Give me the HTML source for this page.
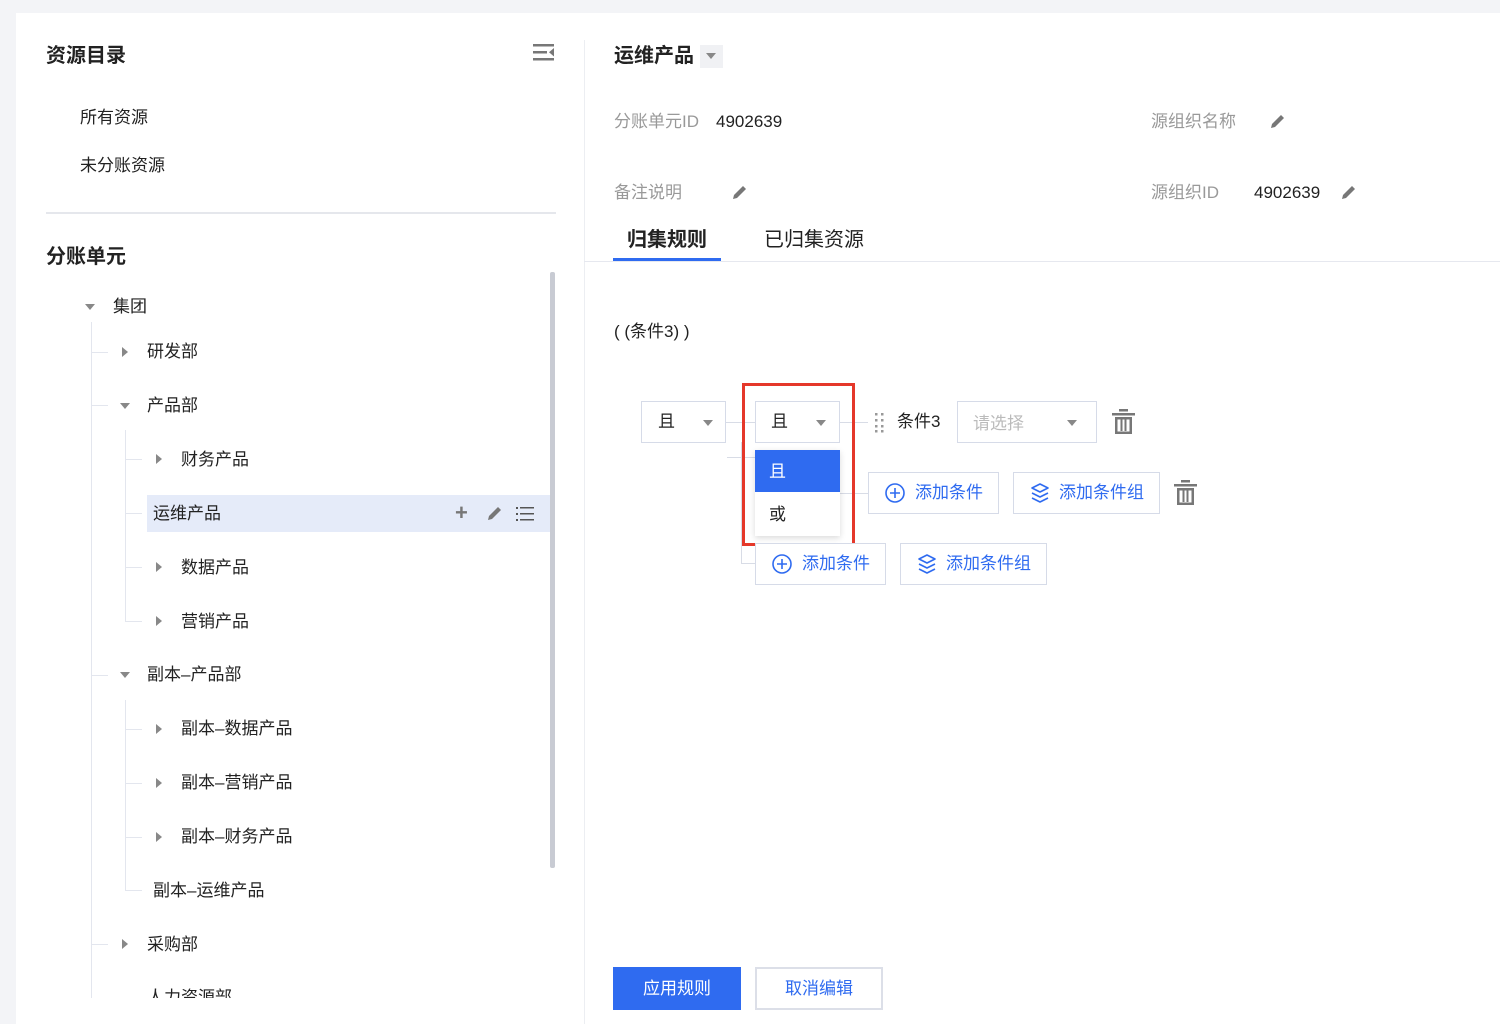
<!DOCTYPE html>
<html><head><meta charset="utf-8"><style>
*{margin:0;padding:0;box-sizing:border-box}
body{width:1500px;height:1024px;background:#f3f4f7;font-family:"Liberation Sans","Noto Sans CJK SC",sans-serif;color:#222;position:relative;overflow:hidden;font-size:17px}
.a{position:absolute;white-space:nowrap}
.panel{position:absolute;left:16px;top:13px;width:1484px;height:1011px;background:#fff}
.t{line-height:22px}
.hl{position:absolute;height:1px;background:#e3e6ee}
.vl{position:absolute;width:1px;background:#e3e6ee}
.tri-d{position:absolute;width:0;height:0;border-left:5px solid transparent;border-right:5px solid transparent;border-top:6px solid #888}
.tri-r{position:absolute;width:0;height:0;border-top:5px solid transparent;border-bottom:5px solid transparent;border-left:6px solid #888}
.box{position:absolute;border:1px solid #d6dbe8;background:#fff}
.blue{color:#2f6bf0}
.gray{color:#999}
</style></head><body>
<div class="panel"></div>
<!-- left -->
<div class="a t" style="left:46px;top:45px;font-size:20px;font-weight:bold">资源目录</div>
<svg class="a" style="left:533px;top:43px" width="22" height="18"><rect x="0" y="1" width="21" height="2.5" fill="#777"/><rect x="0" y="8" width="14" height="2.5" fill="#777"/><path d="M21 5 L16 9.3 L21 13.5Z" fill="#777"/><rect x="0" y="15" width="21" height="2.5" fill="#777"/></svg>
<div class="a t" style="left:80px;top:107px">所有资源</div>
<div class="a t" style="left:80px;top:155px">未分账资源</div>
<div class="hl" style="left:46px;top:212px;width:510px;background:#e5e7ec;height:2px"></div>
<div class="a t" style="left:46px;top:246px;font-size:20px;font-weight:bold">分账单元</div>
<div class="tri-d" style="left:85px;top:304px"></div>
<div class="a t" style="left:113px;top:296px">集团</div>
<div class="vl" style="left:91px;top:322px;height:676px"></div>
<div class="hl" style="left:91px;top:352px;width:17px"></div>
<div class="tri-r" style="left:122px;top:347px"></div><div class="a t" style="left:147px;top:341px">研发部</div>
<div class="hl" style="left:91px;top:405px;width:17px"></div>
<div class="tri-d" style="left:120px;top:403px"></div><div class="a t" style="left:147px;top:395px">产品部</div>
<div class="vl" style="left:125px;top:430px;height:192px"></div>
<div class="hl" style="left:125px;top:459px;width:17px"></div>
<div class="tri-r" style="left:156px;top:454px"></div><div class="a t" style="left:181px;top:449px">财务产品</div>
<div class="a" style="left:147px;top:495px;width:404px;height:37px;background:#e5ebf9"></div>
<div class="hl" style="left:125px;top:513px;width:17px"></div>
<div class="a t" style="left:153px;top:503px">运维产品</div>
<div class="a" style="left:455px;top:503px;font-size:22px;color:#777;line-height:20px;font-weight:bold">+</div>
<svg class="a" style="left:486px;top:505px" width="17" height="17"><path d="M2 15 L3 11 L12 2 L15 5 L6 14Z" fill="#777"/></svg>
<svg class="a" style="left:516px;top:506px" width="19" height="16"><g fill="#555"><rect x="0" y="1" width="2" height="2"/><rect x="4" y="1" width="14" height="1.5"/><rect x="0" y="7" width="2" height="2"/><rect x="4" y="7" width="14" height="1.5"/><rect x="0" y="13" width="2" height="2"/><rect x="4" y="13" width="14" height="1.5"/></g></svg>
<div class="hl" style="left:125px;top:567px;width:17px"></div>
<div class="tri-r" style="left:156px;top:562px"></div><div class="a t" style="left:181px;top:557px">数据产品</div>
<div class="hl" style="left:125px;top:621px;width:17px"></div>
<div class="tri-r" style="left:156px;top:616px"></div><div class="a t" style="left:181px;top:611px">营销产品</div>
<div class="hl" style="left:91px;top:675px;width:17px"></div>
<div class="tri-d" style="left:120px;top:672px"></div><div class="a t" style="left:147px;top:664px">副本–产品部</div>
<div class="vl" style="left:125px;top:700px;height:190px"></div>
<div class="hl" style="left:125px;top:729px;width:17px"></div>
<div class="tri-r" style="left:156px;top:724px"></div><div class="a t" style="left:181px;top:718px">副本–数据产品</div>
<div class="hl" style="left:125px;top:783px;width:17px"></div>
<div class="tri-r" style="left:156px;top:778px"></div><div class="a t" style="left:181px;top:772px">副本–营销产品</div>
<div class="hl" style="left:125px;top:837px;width:17px"></div>
<div class="tri-r" style="left:156px;top:832px"></div><div class="a t" style="left:181px;top:826px">副本–财务产品</div>
<div class="hl" style="left:125px;top:890px;width:17px"></div>
<div class="a t" style="left:153px;top:880px">副本–运维产品</div>
<div class="hl" style="left:91px;top:944px;width:17px"></div>
<div class="tri-r" style="left:122px;top:939px"></div><div class="a t" style="left:147px;top:934px">采购部</div>
<div class="a" style="left:110px;top:987px;width:200px;height:11px;overflow:hidden"><div class="a t" style="left:37px;top:0px">人力资源部</div></div>
<div class="a" style="left:550px;top:272px;width:5px;height:596px;background:#c8cbd3;border-radius:2px"></div>
<div class="vl" style="left:584px;top:40px;height:984px;background:#eceef2"></div>
<!-- right -->
<div class="a t" style="left:614px;top:45px;font-size:20px;font-weight:bold">运维产品</div>
<div class="a" style="left:700px;top:45px;width:23px;height:23px;background:#f0f1f4"></div>
<div class="tri-d" style="left:706px;top:53px;border-top-color:#888"></div>
<div class="a t gray" style="left:614px;top:111px;font-size:17px">分账单元ID</div>
<div class="a t" style="left:716px;top:111px;font-size:17px">4902639</div>
<div class="a t gray" style="left:1151px;top:111px;font-size:17px">源组织名称</div>
<svg class="a" style="left:1269px;top:113px" width="17" height="17"><path d="M2 15 L3 11 L12 2 L15 5 L6 14Z" fill="#777"/></svg>
<div class="a t gray" style="left:614px;top:182px;font-size:17px">备注说明</div>
<svg class="a" style="left:731px;top:184px" width="17" height="17"><path d="M2 15 L3 11 L12 2 L15 5 L6 14Z" fill="#777"/></svg>
<div class="a t gray" style="left:1151px;top:182px;font-size:17px">源组织ID</div>
<div class="a t" style="left:1254px;top:182px;font-size:17px">4902639</div>
<svg class="a" style="left:1340px;top:184px" width="17" height="17"><path d="M2 15 L3 11 L12 2 L15 5 L6 14Z" fill="#777"/></svg>
<div class="a t" style="left:627px;top:229px;font-size:20px;font-weight:bold">归集规则</div>
<div class="a t" style="left:764px;top:229px;font-size:20px">已归集资源</div>
<div class="hl" style="left:584px;top:261px;width:916px;background:#e6e8ef"></div>
<div class="a" style="left:613px;top:258px;width:108px;height:3px;background:#2f6bf0"></div>
<div class="a t" style="left:614px;top:321px;font-size:17px">( (条件3) )</div>
<!-- connectors -->
<div class="hl" style="left:726px;top:422px;width:30px;background:#d8dce6"></div>
<div class="vl" style="left:741px;top:442px;height:122px;background:#d8dce6"></div>
<div class="hl" style="left:727px;top:457px;width:28px;background:#d8dce6"></div>
<div class="hl" style="left:741px;top:563px;width:14px;background:#d8dce6"></div>
<div class="hl" style="left:840px;top:422px;width:28px;background:#d8dce6"></div>
<div class="hl" style="left:840px;top:493px;width:28px;background:#d8dce6"></div>
<div class="box" style="left:641px;top:401px;width:85px;height:42px"></div>
<div class="a t" style="left:658px;top:411px;font-size:17px">且</div>
<div class="tri-d" style="left:703px;top:420px"></div>
<div class="box" style="left:755px;top:401px;width:85px;height:42px"></div>
<div class="a t" style="left:771px;top:411px;font-size:17px">且</div>
<div class="tri-d" style="left:816px;top:420px"></div>
<svg class="a" style="left:874px;top:412px" width="12" height="22"><g fill="#999"><rect x="1" y="1" width="2.5" height="2.5"/><rect x="7" y="1" width="2.5" height="2.5"/><rect x="1" y="7" width="2.5" height="2.5"/><rect x="7" y="7" width="2.5" height="2.5"/><rect x="1" y="13" width="2.5" height="2.5"/><rect x="7" y="13" width="2.5" height="2.5"/><rect x="1" y="18" width="2.5" height="2.5"/><rect x="7" y="18" width="2.5" height="2.5"/></g></svg>
<div class="a t" style="left:897px;top:411px;font-size:17px">条件3</div>
<div class="box" style="left:957px;top:401px;width:140px;height:42px"></div>
<div class="a t" style="left:973px;top:413px;font-size:17px;color:#bbb">请选择</div>
<div class="tri-d" style="left:1067px;top:420px"></div>
<svg class="a" style="left:1112px;top:409px" width="24" height="26"><g fill="#777"><rect x="0" y="4" width="23" height="2.5"/><rect x="7" y="0" width="9" height="2.5"/><path d="M3 8 H20 V25 H3Z M5.5 10.5 V22.5 H17.5 V10.5Z"/><rect x="8.5" y="10" width="2" height="12"/><rect x="12.5" y="10" width="2" height="12"/></g></svg>
<!-- dropdown -->
<div class="a" style="left:755px;top:450px;width:85px;height:86px;background:#fff;box-shadow:0 2px 6px rgba(0,0,0,.15)"></div>
<div class="a" style="left:755px;top:450px;width:85px;height:42px;background:#2f6bf0"></div>
<div class="a t" style="left:769px;top:461px;font-size:17px;color:#fff">且</div>
<div class="a t" style="left:769px;top:504px;font-size:17px">或</div>
<div class="a" style="left:742px;top:383px;width:113px;height:163px;border:3px solid #e5382a"></div>
<!-- add buttons -->
<div class="box" style="left:868px;top:472px;width:131px;height:42px"></div>
<svg class="a" style="left:884px;top:482px" width="22" height="22"><circle cx="11" cy="11" r="9" fill="none" stroke="#2f6bf0" stroke-width="1.6"/><path d="M11 6V16M6 11H16" stroke="#2f6bf0" stroke-width="1.6"/></svg>
<div class="a t blue" style="left:915px;top:482px;font-size:17px">添加条件</div>
<div class="box" style="left:1013px;top:472px;width:147px;height:42px"></div>
<svg class="a" style="left:1029px;top:482px" width="22" height="22"><path d="M3 6L11 2L19 6L11 10Z M3 11L11 15L19 11 M3 16L11 20L19 16" fill="none" stroke="#2f6bf0" stroke-width="1.6" stroke-linejoin="round"/></svg>
<div class="a t blue" style="left:1059px;top:482px;font-size:17px">添加条件组</div>
<svg class="a" style="left:1174px;top:480px" width="24" height="26"><g fill="#777"><rect x="0" y="4" width="23" height="2.5"/><rect x="7" y="0" width="9" height="2.5"/><path d="M3 8 H20 V25 H3Z M5.5 10.5 V22.5 H17.5 V10.5Z"/><rect x="8.5" y="10" width="2" height="12"/><rect x="12.5" y="10" width="2" height="12"/></g></svg>
<div class="box" style="left:755px;top:543px;width:131px;height:42px"></div>
<svg class="a" style="left:771px;top:553px" width="22" height="22"><circle cx="11" cy="11" r="9" fill="none" stroke="#2f6bf0" stroke-width="1.6"/><path d="M11 6V16M6 11H16" stroke="#2f6bf0" stroke-width="1.6"/></svg>
<div class="a t blue" style="left:802px;top:553px;font-size:17px">添加条件</div>
<div class="box" style="left:900px;top:543px;width:147px;height:42px"></div>
<svg class="a" style="left:916px;top:553px" width="22" height="22"><path d="M3 6L11 2L19 6L11 10Z M3 11L11 15L19 11 M3 16L11 20L19 16" fill="none" stroke="#2f6bf0" stroke-width="1.6" stroke-linejoin="round"/></svg>
<div class="a t blue" style="left:946px;top:553px;font-size:17px">添加条件组</div>
<!-- bottom buttons -->
<div class="a" style="left:613px;top:967px;width:128px;height:43px;background:#2f6bf0"></div>
<div class="a t" style="left:643px;top:978px;font-size:17px;color:#fff">应用规则</div>
<div class="box" style="left:755px;top:967px;width:128px;height:43px;border:2px solid #dcdfe8"></div>
<div class="a t blue" style="left:785px;top:978px;font-size:17px">取消编辑</div>
</body></html>
